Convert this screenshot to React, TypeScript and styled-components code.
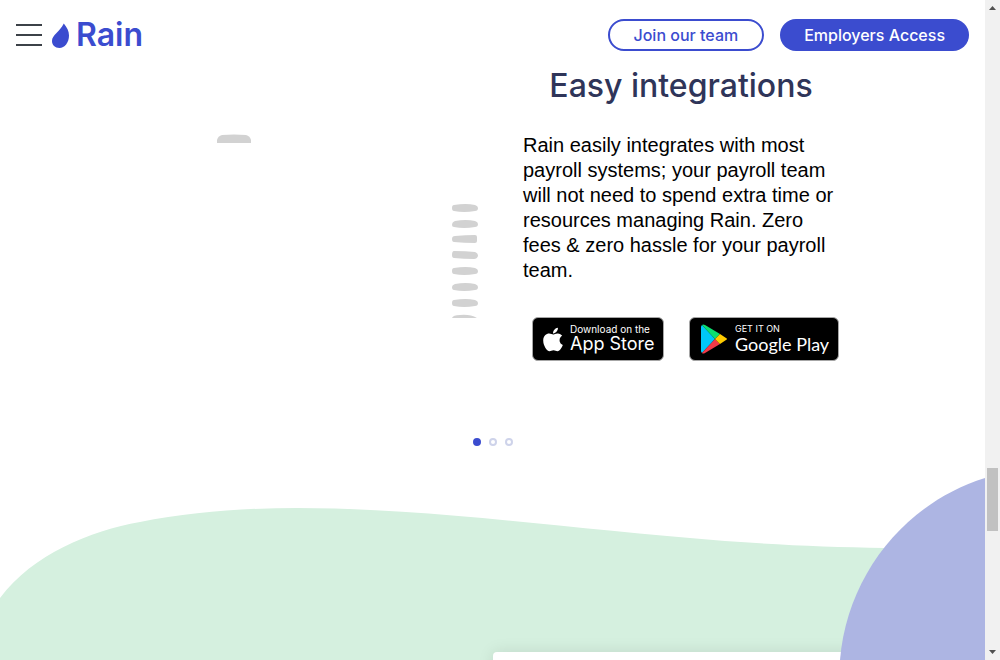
import React from "react";
import styled, { createGlobalStyle } from "styled-components";
import { FaApple } from "react-icons/fa";

const GlobalStyle = createGlobalStyle`
  *, *::before, *::after { box-sizing: border-box; }
  body {
    margin: 0;
    background: #fff;
    font-family: Inter, "Liberation Sans", Arial, sans-serif;
  }
`;

const Frame = styled.div`
  display: flex;
  height: 100vh;
  overflow: hidden;
`;

const Page = styled.div`
  flex: 1;
  min-width: 0;
  display: flex;
  flex-direction: column;
  overflow: hidden;
`;

const Header = styled.header`
  display: flex;
  align-items: center;
  justify-content: space-between;
  padding: 19px 16px 10px;
`;

const Brand = styled.div`
  display: flex;
  align-items: center;
  gap: 10px;
`;

const MenuButton = styled.button`
  display: flex;
  flex-direction: column;
  gap: 8px;
  width: 26px;
  padding: 0;
  border: 0;
  background: none;
`;

const MenuBar = styled.span`
  height: 2px;
  background: #3c4248;
`;

const Logo = styled.a`
  display: flex;
  align-items: center;
  gap: 6px;
  color: #3b4ccf;
  font-size: 32px;
  line-height: 32px;
  font-weight: 600;
  text-decoration: none;
`;

const Actions = styled.nav`
  display: flex;
  gap: 16px;
`;

const PillButton = styled.button<{ $solid?: boolean }>`
  height: 32px;
  padding: 0 24px;
  border: ${(p) => (p.$solid ? "0" : "2px solid #3b4ccf")};
  border-radius: 16px;
  background: ${(p) => (p.$solid ? "#3b4ccf" : "#fff")};
  color: ${(p) => (p.$solid ? "#fff" : "#3b4ccf")};
  font-family: inherit;
  font-size: 16px;
  font-weight: 500;
  line-height: 28px;
  white-space: nowrap;
`;

const Slide = styled.section`
  display: flex;
  justify-content: center;
  gap: 45px;
`;

const Illustration = styled.svg`
  flex: 0 1 332px;
  width: 332px;
  height: 260px;
`;

const Copy = styled.div`
  width: 316px;
`;

const Title = styled.h2`
  margin: 0 0 22px;
  color: #2f3559;
  font-size: 32px;
  line-height: 50px;
  font-weight: 500;
  text-align: center;
`;

const Text = styled.p`
  margin: 0 0 34px;
  padding-right: 4px;
  color: #000;
  font-family: "Liberation Sans", Arial, sans-serif;
  font-size: 20px;
  line-height: 25px;
`;

const Badges = styled.div`
  display: flex;
  justify-content: flex-end;
  gap: 25px;
`;

const Badge = styled.a<{ $width: number }>`
  display: flex;
  align-items: center;
  gap: 7px;
  width: ${(p) => p.$width}px;
  height: 44px;
  padding-left: 10px;
  border: 1px solid #a6a6a6;
  border-radius: 6px;
  background: #000;
  color: #fff;
  text-decoration: none;
  white-space: nowrap;
`;

const AppleMark = styled(FaApple)`
  width: 20px;
  height: 27px;
`;

const BadgeText = styled.span`
  display: flex;
  flex-direction: column;
`;

const BadgeSmall = styled.span<{ $caps?: boolean }>`
  font-size: ${(p) => (p.$caps ? 9 : 10)}px;
  line-height: 10px;
`;

const BadgeName = styled.span<{ $rounded?: boolean }>`
  font-family: ${(p) => (p.$rounded ? "Lato" : "Inter")}, sans-serif;
  font-size: 18px;
  line-height: 20px;
`;

const Dots = styled.div`
  display: flex;
  justify-content: center;
  gap: 8px;
  margin-top: 77px;
`;

const Dot = styled.button<{ $active?: boolean }>`
  width: 8px;
  height: 8px;
  padding: 0;
  border: 2px solid ${(p) => (p.$active ? "#3b4ccf" : "#ced3ea")};
  border-radius: 50%;
  background: ${(p) => (p.$active ? "#3b4ccf" : "#fff")};
`;

const Landscape = styled.section`
  position: relative;
  flex: 1;
  margin-top: 32px;
  padding-top: 174px;
`;

const Wave = styled.svg`
  position: absolute;
  inset: 0;
  width: 100%;
  height: 182px;
`;

const Hill = styled.svg`
  position: absolute;
  top: 0;
  right: 0;
  width: 145px;
  height: 182px;
`;

const Card = styled.div`
  position: relative;
  height: 120px;
  margin-left: 50%;
  border-radius: 4px;
  background: #fff;
  box-shadow: 0 0 16px rgba(0, 0, 0, 0.1);
`;

const ScrollRail = styled.div`
  display: flex;
  flex-direction: column;
  align-items: center;
  width: 15px;
  background: #f1f1f1;
`;

const ScrollArrow = styled.svg`
  width: 15px;
  height: 15px;
  fill: #505050;
`;

const RailSpace = styled.div<{ $grow: number }>`
  flex: ${(p) => p.$grow} 1 0;
`;

const Thumb = styled.div`
  width: 11px;
  height: 63px;
  background: #c1c1c1;
`;

const marks = [
  "M2 1Q14 -1 23 1Q26 2 26 4Q26 7 23 7Q12 9 2 7Q0 7 0 4Q0 1 2 1Z",
  "M3 1Q14 -1 23 1Q26 2 26 4Q26 7 23 7Q12 9 2 7Q0 7 0 5Q0 2 3 1Z",
  "M3 1Q14 0 23 0Q25 0 25 2V6Q25 8 23 8Q12 8 2 7Q0 7 0 4Q0 1 3 1Z",
  "M2 0Q14 0 23 1Q26 2 26 5Q25 8 22 8Q12 8 2 7Q0 7 0 4Q0 0 2 0Z",
  "M2 1Q14 -1 23 1Q26 2 26 4Q26 7 23 7Q12 9 2 7Q0 7 0 4Q0 1 2 1Z",
  "M3 1Q14 -1 23 1Q26 2 26 4Q26 7 23 7Q12 9 2 7Q0 7 0 4Q0 2 3 1Z",
  "M2 1Q14 -1 23 1Q26 2 26 4Q26 7 23 7Q12 9 2 7Q0 7 0 4Q0 1 2 1Z",
];

export default function App() {
  return (
    <Frame>
      <GlobalStyle />
      <Page>
        <Header>
          <Brand>
            <MenuButton type="button" aria-label="Menu">
              <MenuBar />
              <MenuBar />
              <MenuBar />
            </MenuButton>
            <Logo href="#">
              <svg width="18" height="26" viewBox="0 0 18 26" aria-hidden="true">
                <path d="M11.8 1.5C15 5.5 17 9 17 13.5C17 20.5 12.6 26 7.5 26C3 26 0 23 0 19C0 13 7.5 10 11.8 1.5Z" fill="#3b4ccf" />
              </svg>
              Rain
            </Logo>
          </Brand>
          <Actions>
            <PillButton type="button">Join our team</PillButton>
            <PillButton type="button" $solid>Employers Access</PillButton>
          </Actions>
        </Header>

        <Slide>
          <Illustration viewBox="0 0 332 260" fill="#d2d2d2" aria-hidden="true">
            <path d="M71 82V79Q72 75 76 74Q88 73 100 74Q104 75 105 79V82Z" />
            {marks.map((d, i) => (
              <path key={i} d={d} transform={`translate(306 ${143 + i * 16 - (i > 1 ? 1 : 0)})`} />
            ))}
            <path d="M306 257Q307 254 314 254Q324 253 331 257Z" />
          </Illustration>
          <Copy>
            <Title>Easy integrations</Title>
            <Text>
              Rain easily integrates with most payroll systems; your payroll team will not need to
              spend extra time or resources managing Rain. Zero fees &amp; zero hassle for your payroll team.
            </Text>
            <Badges>
              <Badge href="#" $width={132}>
                <AppleMark aria-hidden="true" />
                <BadgeText>
                  <BadgeSmall>Download on the</BadgeSmall>
                  <BadgeName>App Store</BadgeName>
                </BadgeText>
              </Badge>
              <Badge href="#" $width={150}>
                <svg width="28" height="30" viewBox="0 0 28 30" aria-hidden="true">
                  <path d="M2 1L15 15L2 29Q1 28 1 27V3Q1 2 2 1Z" fill="#00c8f8" />
                  <path d="M2 1Q3 0 5 1L20 10L15 15Z" fill="#0ce070" />
                  <path d="M2 29Q3 30 5 29L20 20L15 15Z" fill="#f23a48" />
                  <path d="M20 10L26 14Q28 15 26 16L20 20L15 15Z" fill="#ffcb00" />
                </svg>
                <BadgeText>
                  <BadgeSmall $caps>GET IT ON</BadgeSmall>
                  <BadgeName $rounded>Google Play</BadgeName>
                </BadgeText>
              </Badge>
            </Badges>
          </Copy>
        </Slide>

        <Dots>
          <Dot type="button" aria-label="Slide 1" $active />
          <Dot type="button" aria-label="Slide 2" />
          <Dot type="button" aria-label="Slide 3" />
        </Dots>

        <Landscape>
          <Wave viewBox="0 478 985 182" preserveAspectRatio="none" aria-hidden="true">
            <path
              d="M0 598C33 554 90 531 140 522C190 512 245 508 297 508C430 508 560 528 725 541C780 545 830 547 885 548H985V660H0Z"
              fill="#d5f0df"
            />
          </Wave>
          <Card />
          <Hill viewBox="840 478 145 182" aria-hidden="true">
            <path d="M985 478C905 503 847 575 840 660H985Z" fill="#adb5e3" />
          </Hill>
        </Landscape>
      </Page>
      <ScrollRail aria-hidden="true">
        <ScrollArrow viewBox="0 0 15 15">
          <path d="M4 10L7.5 6L11 10Z" />
        </ScrollArrow>
        <RailSpace $grow={453} />
        <Thumb />
        <RailSpace $grow={114} />
        <ScrollArrow viewBox="0 0 15 15">
          <path d="M4 5L7.5 9L11 5Z" />
        </ScrollArrow>
      </ScrollRail>
    </Frame>
  );
}
